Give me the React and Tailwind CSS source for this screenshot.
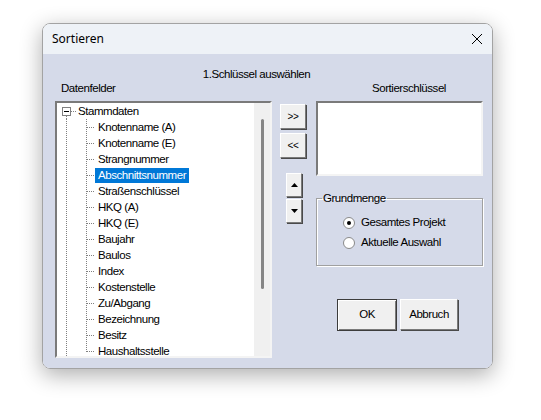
import React from "react";

const ui = "font-['Liberation_Sans',Arial,sans-serif] text-[11.5px] tracking-[-0.45px] text-black";

const felder = [
  "Knotenname (A)",
  "Knotenname (E)",
  "Strangnummer",
  "Abschnittsnummer",
  "Straßenschlüssel",
  "HKQ (A)",
  "HKQ (E)",
  "Baujahr",
  "Baulos",
  "Index",
  "Kostenstelle",
  "Zu/Abgang",
  "Bezeichnung",
  "Besitz",
  "Haushaltsstelle",
];

const RootRow = () => (
  <div className="flex h-[16px] items-center">
    <svg width="19" height="16" className="shrink-0">
      <rect x="5.5" y="4.5" width="8" height="8" fill="#fff" stroke="#808080" />
      <line x1="7" y1="8.5" x2="12" y2="8.5" stroke="#000" />
      <line x1="14" y1="8.5" x2="19" y2="8.5" stroke="#808080" strokeDasharray="1 1" />
      <line x1="9.5" y1="13" x2="9.5" y2="16" stroke="#808080" strokeDasharray="1 1" />
    </svg>
    <span className="pl-[2px] leading-[16px]">Stammdaten</span>
  </div>
);

const ChildRow = ({ label, last, selected }) => (
  <div className="flex h-[16px] items-center">
    <svg width="38" height="16" className="shrink-0">
      <line x1="9.5" y1="0" x2="9.5" y2="16" stroke="#808080" strokeDasharray="1 1" />
      <line x1="29.5" y1="0" x2="29.5" y2={last ? 9 : 16} stroke="#808080" strokeDasharray="1 1" />
      <line x1="30" y1="8.5" x2="38" y2="8.5" stroke="#808080" strokeDasharray="1 1" />
    </svg>
    <span
      className={
        "px-[3px] leading-[15px] whitespace-nowrap " +
        (selected ? "bg-[#0078d7] text-white" : "")
      }
    >
      {label}
    </span>
  </div>
);

const Btn = ({ children, className = "" }) => (
  <button
    className={
      "flex items-center justify-center bg-[#f0f0f0] border border-t-white border-l-white border-r-[#7a7a7a] border-b-[#7a7a7a] shadow-[1px_1px_0_#4a4a4a] " +
      className
    }
  >
    {children}
  </button>
);

const Radio = ({ checked, label }) => (
  <div className="flex h-[20px] items-center">
    <span className="ml-[21px] flex h-[12px] w-[12px] items-center justify-center rounded-full border border-[#8a8a8a] bg-white">
      {checked && <span className="h-[4px] w-[4px] rounded-full bg-black" />}
    </span>
    <span className="ml-[6px]">{label}</span>
  </div>
);

export default function App() {
  return (
    <div className="min-h-[420px] w-[541px] bg-white pl-[42px] pt-[23px]">
      <div className="flex h-[346px] w-[451px] flex-col overflow-hidden rounded-[8px] border border-[#a3a3a3] shadow-[0_6px_22px_rgba(0,0,0,0.32)]">
        {/* title bar */}
        <div className="flex h-[30px] shrink-0 items-center justify-between bg-[#eef2f7] pl-[9px] pr-[8px]">
          <span className="font-['Noto_Sans',sans-serif] text-[12px] text-black">Sortieren</span>
          <svg width="12" height="12" className="mr-[1px]">
            <path d="M1 1 L11 11 M11 1 L1 11" stroke="#000" strokeWidth="1" />
          </svg>
        </div>

        {/* body */}
        <div className={"flex flex-1 flex-col bg-[#d5dae9] pl-[12px] pt-[13px] " + ui}>
          <div className="h-[14px] w-[403px] text-center leading-[14px]">1.Schlüssel auswählen</div>
          <div className="flex h-[14px] leading-[14px]">
            <span className="ml-[6px] w-[311px]">Datenfelder</span>
            <span>Sortierschlüssel</span>
          </div>

          <div className="mt-[6px] flex">
            {/* tree */}
            <div className="flex h-[257px] w-[217px] border-2 border-t-[#7a7a7a] border-l-[#7a7a7a] border-r-[#f4f4f4] border-b-[#f4f4f4] bg-white">
              <div className="flex-1 overflow-hidden">
                <RootRow />
                {felder.map((f, i) => (
                  <ChildRow
                    key={f}
                    label={f}
                    last={i === felder.length - 1}
                    selected={f === "Abschnittsnummer"}
                  />
                ))}
              </div>
              <div className="w-[16px] shrink-0 bg-[#f0f0f0]">
                <div className="ml-[7px] mt-[16px] h-[170px] w-[3px] rounded-full bg-[#858585]" />
              </div>
            </div>

            {/* middle buttons */}
            <div className="ml-[8px] flex w-[27px] flex-col">
              <Btn className="mt-[3px] h-[25px] w-[26px] text-[10px]">&gt;&gt;</Btn>
              <Btn className="mt-[4px] h-[25px] w-[26px] text-[10px]">&lt;&lt;</Btn>
              <Btn className="ml-[6px] mt-[15px] h-[24px] w-[16px]">
                <svg width="7" height="4">
                  <path d="M3.5 0 L7 4 L0 4 Z" fill="#000" />
                </svg>
              </Btn>
              <Btn className="ml-[6px] mt-[2px] h-[24px] w-[16px]">
                <svg width="7" height="4">
                  <path d="M0 0 L7 0 L3.5 4 Z" fill="#000" />
                </svg>
              </Btn>
            </div>

            {/* right column */}
            <div className="ml-[9px] flex w-[167px] flex-col">
              <div className="h-[75px] border-2 border-t-[#7a7a7a] border-l-[#7a7a7a] border-r-[#f4f4f4] border-b-[#f4f4f4] bg-white" />

              <fieldset className="mt-[16px] h-[74px] border border-[#a0a0a0] shadow-[inset_1px_1px_0_#fff,1px_1px_0_#fff] px-[5px] pt-[9px]">
                <legend className="px-[1px] leading-[12px]">Grundmenge</legend>
                <Radio checked label="Gesamtes Projekt" />
                <Radio label="Aktuelle Auswahl" />
              </fieldset>

              <div className="mt-[33px] flex pl-[21px]">
                <button className="h-[32px] w-[60px] border border-[#3c3c3c] bg-[#f0f0f0] shadow-[inset_1px_1px_0_#fff,inset_-1px_-1px_0_#7a7a7a]">
                  OK
                </button>
                <Btn className="ml-[3px] h-[31px] w-[58px]">Abbruch</Btn>
              </div>
            </div>
          </div>
        </div>
      </div>
    </div>
  );
}
